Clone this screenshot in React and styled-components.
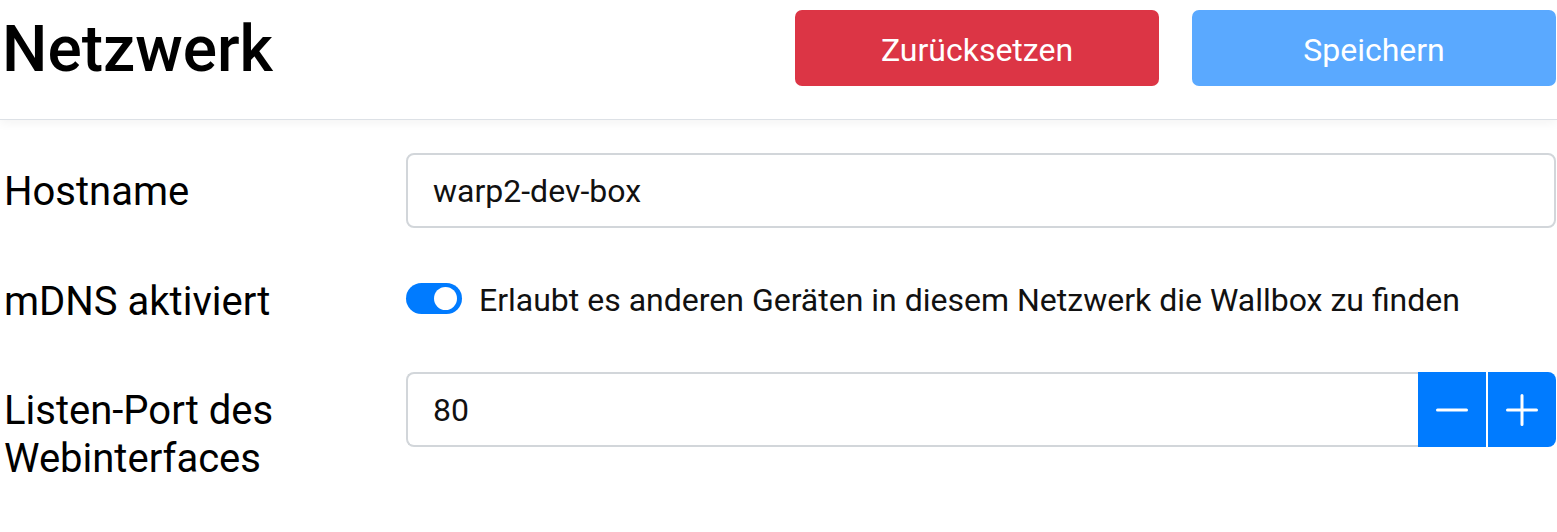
import styled, { createGlobalStyle } from "styled-components";

const GlobalStyle = createGlobalStyle`
  body {
    margin: 0;
    background: #fff;
    font-family: Roboto, "Liberation Sans", sans-serif;
    color: #111;
  }
`;

const Header = styled.header`
  display: flex;
  align-items: center;
  justify-content: space-between;
  box-sizing: border-box;
  height: 120px;
  padding: 10px 1px 33px 2px;
  border-bottom: 1px solid #dde1e6;
  box-shadow: 0 3px 10px rgba(0, 0, 0, 0.05);
`;

const Title = styled.h1`
  margin: 4px 0 0;
  font-size: 64px;
  font-weight: 500;
  line-height: 1.2;
  color: #000;
`;

const Actions = styled.div`
  display: flex;
  gap: 33px;
`;

const ActionButton = styled.button`
  width: 364px;
  height: 76px;
  padding: 3px 0 0;
  border: none;
  border-radius: 7px;
  font-family: inherit;
  font-size: 32px;
  color: #fff;
  background: ${(p) => (p.$variant === "danger" ? "#dc3545" : "#5aa9ff")};
`;

const Form = styled.div`
  display: grid;
  grid-template-columns: 386px 1fr;
  column-gap: 16px;
  row-gap: 34.5px;
  padding: 33px 1px 0 4px;
`;

const Label = styled.label`
  font-size: 40px;
  line-height: 48px;
  padding: 15px 0 12px;
  color: #000;
`;

const Field = styled.div`
  display: flex;
  align-items: ${(p) => (p.$center ? "center" : "flex-start")};
`;

const TextInput = styled.div`
  flex: 1;
  box-sizing: border-box;
  height: 75px;
  display: flex;
  align-items: center;
  padding: 0 25px;
  border: 2px solid #d2d6da;
  border-radius: ${(p) => (p.$joined ? "8px 0 0 8px" : "8px")};
  ${(p) => p.$joined && "border-right: none;"}
  font-size: 32px;
  color: #111;
`;

const Switch = styled.span`
  position: relative;
  display: inline-block;
  flex: none;
  width: 56px;
  height: 31px;
  margin-top: -4px;
  border-radius: 16px;
  background: #007bff;

  &::after {
    content: "";
    position: absolute;
    top: 4px;
    right: 5px;
    width: 23px;
    height: 23px;
    border-radius: 50%;
    background: #fff;
  }
`;

const Hint = styled.span`
  margin-left: 17px;
  font-size: 32px;
  color: #111;
`;

const StepButton = styled.button`
  width: 68px;
  height: 75px;
  margin-left: ${(p) => (p.$last ? "2px" : "0")};
  border: none;
  border-radius: ${(p) => (p.$last ? "0 8px 8px 0" : "0")};
  background: #007bff;
  display: flex;
  align-items: center;
  justify-content: center;
  padding: 0;
`;

const Minus = () => (
  <svg width="32" height="32" viewBox="0 0 32 32">
    <path d="M1.5 16h29" stroke="#fff" strokeWidth="3" strokeLinecap="round" />
  </svg>
);

const Plus = () => (
  <svg width="32" height="32" viewBox="0 0 32 32">
    <path d="M1.5 16h29M16 1.5v29" stroke="#fff" strokeWidth="3" strokeLinecap="round" />
  </svg>
);

const App = () => {
  return (
    <>
      <GlobalStyle />
      <Header>
        <Title>Netzwerk</Title>
        <Actions>
          <ActionButton $variant="danger">Zurücksetzen</ActionButton>
          <ActionButton>Speichern</ActionButton>
        </Actions>
      </Header>
      <Form>
        <Label>Hostname</Label>
        <Field>
          <TextInput>warp2-dev-box</TextInput>
        </Field>

        <Label>mDNS aktiviert</Label>
        <Field $center>
          <Switch />
          <Hint>Erlaubt es anderen Geräten in diesem Netzwerk die Wallbox zu finden</Hint>
        </Field>

        <Label>Listen-Port des Webinterfaces</Label>
        <Field>
          <TextInput $joined>80</TextInput>
          <StepButton><Minus /></StepButton>
          <StepButton $last><Plus /></StepButton>
        </Field>
      </Form>
    </>
  );
};

export default App;
